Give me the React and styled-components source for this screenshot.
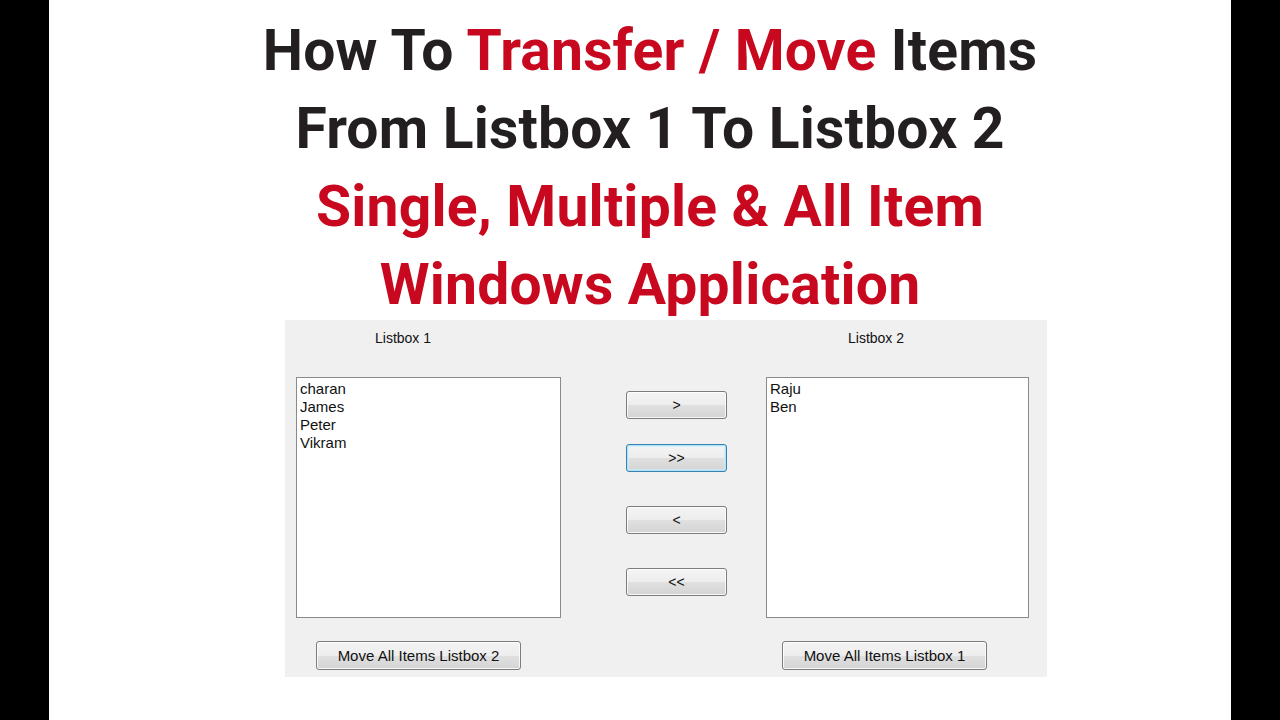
import React from "react";
import styled, { createGlobalStyle } from "styled-components";

const Global = createGlobalStyle`
  html, body { margin: 0; padding: 0; background: #000; }
  body { width: 1280px; height: 720px; overflow: hidden; }
`;

const Frame = styled.div`
  display: flex;
  width: 1280px;
  height: 720px;
  background: #000;
`;

const Bar = styled.div`
  width: 49px;
  flex: none;
  background: #000;
`;

const Slide = styled.main`
  width: 1182px;
  flex: none;
  background: #fff;
  display: flex;
  flex-direction: column;
`;

const Title = styled.h1`
  margin: 0;
  padding: 12px 0 0 20px;
  text-align: center;
  font-family: Roboto, "Liberation Sans", sans-serif;
  font-weight: 700;
  font-size: 57px;
  line-height: 78px;
  letter-spacing: 0.2px;
  color: #231f20;
`;

const Line = styled.div`
  color: ${(p) => (p.$red ? "#c8081e" : "#231f20")};
  white-space: nowrap;
`;

const Red = styled.span`
  color: #c8081e;
`;

const Panel = styled.section`
  margin: -4px 0 0 236px;
  width: 762px;
  height: 357px;
  box-sizing: border-box;
  background: #f0f0f0;
  padding: 9px 0 0 11px;
  display: flex;
  font-family: "Liberation Sans", Arial, sans-serif;
  font-size: 15px;
  color: #111;
`;

const Column = styled.div`
  display: flex;
  flex-direction: column;
  width: ${(p) => p.$w}px;
  margin-left: ${(p) => p.$ml || 0}px;
`;

const Label = styled.div`
  height: 18px;
  line-height: 18px;
  font-size: 14px;
  margin-left: ${(p) => p.$ml}px;
  margin-bottom: 30px;
`;

const ListBox = styled.div`
  height: 241px;
  box-sizing: border-box;
  background: #fff;
  border: 1px solid #8a8a8a;
  padding: 2px 3px;
  display: flex;
  flex-direction: column;
`;

const Item = styled.div`
  height: 18px;
  line-height: 18px;
`;

const Button = styled.button`
  box-sizing: border-box;
  width: ${(p) => p.$w}px;
  height: ${(p) => p.$h}px;
  margin-top: ${(p) => p.$mt || 0}px;
  margin-left: ${(p) => p.$ml || 0}px;
  padding: 0;
  border: 1px solid ${(p) => (p.$focus ? "#3c7fb1" : "#7c7c7c")};
  border-radius: 3px;
  background: linear-gradient(#f4f4f4 0%, #ededed 50%, #e0e0e0 51%, #d4d4d4 100%);
  box-shadow: ${(p) =>
    p.$focus
      ? "inset 0 0 0 1px #a9e4f7, inset 0 0 0 2px rgba(200,240,255,0.6)"
      : "inset 0 0 0 1px rgba(255,255,255,0.8)"};
  font-family: "Liberation Sans", Arial, sans-serif;
  font-size: ${(p) => p.$fs || 14}px;
  color: #111;
  text-align: center;
  line-height: ${(p) => p.$h - 2}px;
  flex: none;
`;

const Arrows = styled.div`
  display: flex;
  flex-direction: column;
  padding-top: 62px;
  margin-left: 65px;
  width: 101px;
`;

export default function App() {
  return (
    <>
      <Global />
      <Frame>
        <Bar />
        <Slide>
          <Title>
            <Line>
              How To <Red>Transfer / Move</Red> Items
            </Line>
            <Line>From Listbox 1 To Listbox 2</Line>
            <Line $red>Single, Multiple &amp; All Item</Line>
            <Line $red>Windows Application</Line>
          </Title>
          <Panel>
            <Column $w={265}>
              <Label $ml={79}>Listbox 1</Label>
              <ListBox>
                <Item>charan</Item>
                <Item>James</Item>
                <Item>Peter</Item>
                <Item>Vikram</Item>
              </ListBox>
              <Button $w={205} $h={29} $mt={23} $ml={20} $fs={15}>
                Move All Items Listbox 2
              </Button>
            </Column>
            <Arrows>
              <Button $w={101} $h={28}>&gt;</Button>
              <Button $w={101} $h={28} $mt={25} $focus>&gt;&gt;</Button>
              <Button $w={101} $h={28} $mt={34}>&lt;</Button>
              <Button $w={101} $h={28} $mt={34}>&lt;&lt;</Button>
            </Arrows>
            <Column $w={263} $ml={39}>
              <Label $ml={82}>Listbox 2</Label>
              <ListBox>
                <Item>Raju</Item>
                <Item>Ben</Item>
              </ListBox>
              <Button $w={205} $h={29} $mt={23} $ml={16} $fs={15}>
                Move All Items Listbox 1
              </Button>
            </Column>
          </Panel>
        </Slide>
        <Bar />
      </Frame>
    </>
  );
}
